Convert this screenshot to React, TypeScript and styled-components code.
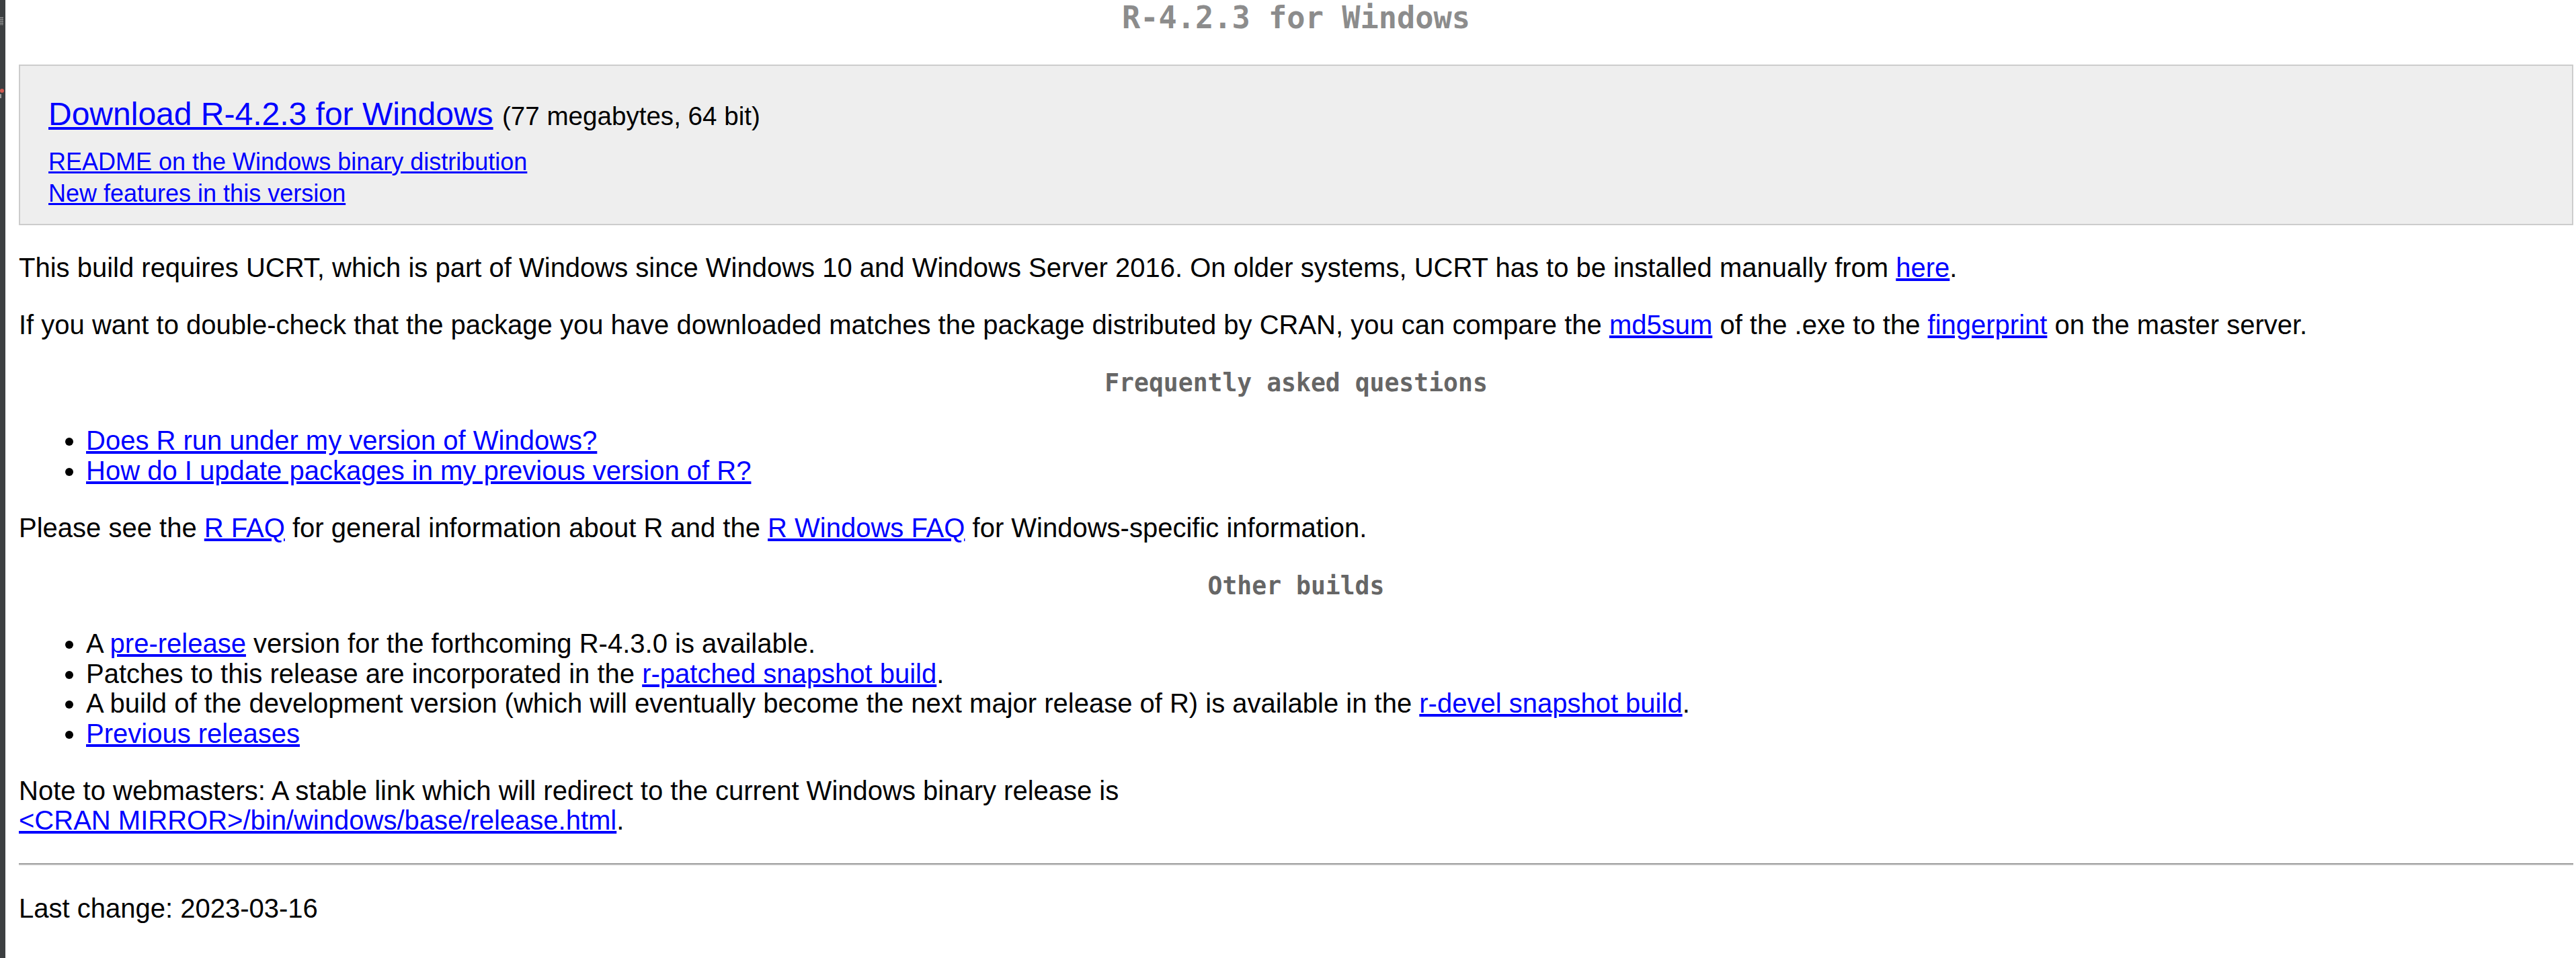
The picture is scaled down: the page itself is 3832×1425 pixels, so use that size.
import React from "react";
import styled, { createGlobalStyle } from "styled-components";

const GlobalStyle = createGlobalStyle`
  html, body {
    margin: 0;
    padding: 0;
    background: #ffffff;
  }
  #root {
    min-height: 1425px;
  }
`;

const Shell = styled.div`
  display: flex;
  min-height: 1425px;
  background: #ffffff;
`;

const EdgeStrip = styled.div`
  flex: 0 0 8px;
  background: #3c3f41;
  display: flex;
  flex-direction: column;
  align-items: flex-start;
  padding-top: 25px;
`;

const GripDots = styled.div`
  width: 5px;
  height: 13px;
  background-image: radial-gradient(circle, #9a9a9a 0.9px, transparent 1.2px);
  background-size: 2.5px 3px;
`;

const RedDot = styled.div`
  margin-top: 94px;
  width: 6px;
  height: 6px;
  border-radius: 50%;
  background: #d05a50;
`;

const GreyTick = styled.div`
  margin-top: 2px;
  width: 2px;
  height: 6px;
  background: #a0a0a0;
`;

const Page = styled.main`
  flex: 1;
  min-width: 0;
  padding: 0 4px 0 20px;
  font-family: "Liberation Sans", Arial, sans-serif;
  font-size: 40px;
  line-height: 44.5px;
  color: #000000;
`;

const Title = styled.h1`
  margin: 0 0 43px;
  font-family: "DejaVu Sans Mono", "Liberation Mono", monospace;
  font-weight: bold;
  font-size: 45.3px;
  line-height: 53px;
  color: #8c8c8c;
  text-align: center;
`;

const SectionHeading = styled.h2`
  margin: 44px 0 42px;
  font-family: "DejaVu Sans Mono", "Liberation Mono", monospace;
  font-weight: bold;
  font-size: 36.4px;
  line-height: 42px;
  color: #666666;
  text-align: center;
`;

const DownloadBox = styled.section`
  border: 2px solid #cccccc;
  background: #eeeeee;
  padding: 45px 42px 22.5px;
`;

const MainLine = styled.div`
  font-size: 48px;
  line-height: 53px;
  margin-bottom: 20.5px;
`;

const SizeNote = styled.span`
  font-size: 38.6px;
  line-height: 1;
`;

const SubLine = styled.div`
  font-size: 36px;
  line-height: 47px;
`;

const Link = styled.a`
  color: #0000ff;
  text-decoration: underline;
`;

const Para = styled.p`
  margin: 40.5px 0;
`;

const List = styled.ul`
  margin: 40.5px 0;
  padding-left: 100px;
  list-style: disc;
`;

const Item = styled.li``;

const Rule = styled.hr`
  margin: 41.5px 0 38.5px;
  height: 0;
  border: none;
  border-top: 2px solid #9a9a9a;
  border-bottom: 2px solid #eeeeee;
`;

export default function App() {
  return (
    <>
      <GlobalStyle />
      <Shell>
        <EdgeStrip>
          <GripDots />
          <RedDot />
          <GreyTick />
        </EdgeStrip>
        <Page>
          <Title>R-4.2.3 for Windows</Title>

          <DownloadBox>
            <MainLine>
              <Link href="#">Download R-4.2.3 for Windows</Link>{" "}
              <SizeNote>(77 megabytes, 64 bit)</SizeNote>
            </MainLine>
            <SubLine>
              <Link href="#">README on the Windows binary distribution</Link>
            </SubLine>
            <SubLine>
              <Link href="#">New features in this version</Link>
            </SubLine>
          </DownloadBox>

          <Para>
            This build requires UCRT, which is part of Windows since Windows 10
            and Windows Server 2016. On older systems, UCRT has to be installed
            manually from <Link href="#">here</Link>.
          </Para>

          <Para>
            If you want to double-check that the package you have downloaded
            matches the package distributed by CRAN, you can compare the{" "}
            <Link href="#">md5sum</Link> of the .exe to the{" "}
            <Link href="#">fingerprint</Link> on the master server.
          </Para>

          <SectionHeading>Frequently asked questions</SectionHeading>

          <List>
            <Item>
              <Link href="#">Does R run under my version of Windows?</Link>
            </Item>
            <Item>
              <Link href="#">How do I update packages in my previous version of R?</Link>
            </Item>
          </List>

          <Para>
            Please see the <Link href="#">R FAQ</Link> for general information
            about R and the <Link href="#">R Windows FAQ</Link> for
            Windows-specific information.
          </Para>

          <SectionHeading>Other builds</SectionHeading>

          <List>
            <Item>
              A <Link href="#">pre-release</Link> version for the forthcoming
              R-4.3.0 is available.
            </Item>
            <Item>
              Patches to this release are incorporated in the{" "}
              <Link href="#">r-patched snapshot build</Link>.
            </Item>
            <Item>
              A build of the development version (which will eventually become
              the next major release of R) is available in the{" "}
              <Link href="#">r-devel snapshot build</Link>.
            </Item>
            <Item>
              <Link href="#">Previous releases</Link>
            </Item>
          </List>

          <Para>
            Note to webmasters: A stable link which will redirect to the current
            Windows binary release is
            <br />
            <Link href="#">&lt;CRAN MIRROR&gt;/bin/windows/base/release.html</Link>.
          </Para>

          <Rule />

          <Para>Last change: 2023-03-16</Para>
        </Page>
      </Shell>
    </>
  );
}
